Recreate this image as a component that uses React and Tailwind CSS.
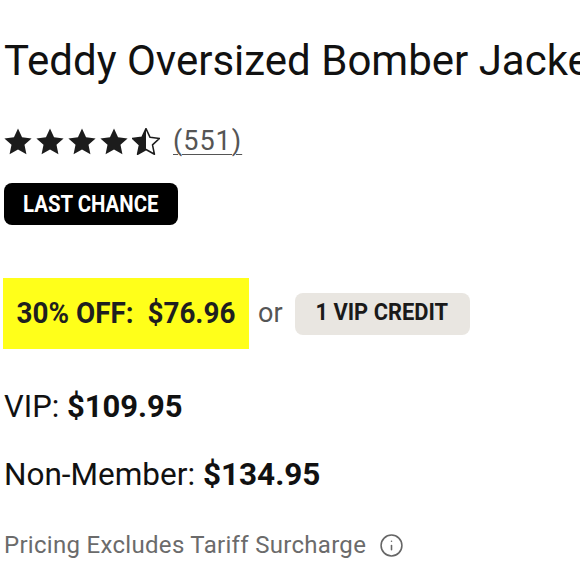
import React from "react";
import { Info } from "lucide-react";

function Star({ half = false }) {
  const d =
    "M12 2.2l2.95 6.35 6.95.78-5.17 4.72 1.42 6.85L12 17.42l-6.15 3.48 1.42-6.85L2.1 9.33l6.95-.78z";
  return (
    <svg width="28" height="27" viewBox="1.8 1.8 20.4 19.6">
      <defs>
        <clipPath id="half">
          <rect x="0" y="0" width="12" height="24" />
        </clipPath>
      </defs>
      {half ? (
        <>
          <path d={d} fill="none" stroke="#1c1c1c" strokeWidth="1.1" strokeLinejoin="round" />
          <path d={d} fill="#1c1c1c" clipPath="url(#half)" />
        </>
      ) : (
        <path d={d} fill="#1c1c1c" />
      )}
    </svg>
  );
}

export default function App() {
  return (
    <div
      className="w-[580px] h-[580px] overflow-hidden bg-white pl-[4px] pt-[36px]"
      style={{ fontFamily: "Roboto, sans-serif" }}
    >
      <h1 className="text-[42px] leading-[50px] text-[#111] whitespace-nowrap">
        Teddy Oversized Bomber Jacket
      </h1>

      {/* rating */}
      <div className="mt-[41px] h-[28px] flex items-center">
        <div className="flex gap-[4px]">
          <Star />
          <Star />
          <Star />
          <Star />
          <Star half />
        </div>
        <span className="ml-[13px] text-[27px] leading-[28px] tracking-[1px] text-[#555] underline underline-offset-4 decoration-1">
          (551)
        </span>
      </div>

      <div className="mt-[28px] flex items-center justify-center h-[42px] w-[174px] rounded-[8px] bg-black text-white font-bold text-[24px]">
        <span className="inline-block scale-x-[0.85]">LAST CHANCE</span>
      </div>

      {/* price */}
      <div className="mt-[53px] flex items-center -ml-[1px]">
        <div className="h-[71px] w-[246px] bg-[#ffff1a] flex items-center justify-center font-bold text-[29px] text-[#1f1f1f]">
          <span className="inline-block scale-x-[0.96] whitespace-pre">30% OFF:  $76.96</span>
        </div>
        <span className="ml-[9px] text-[27px] text-[#555]">or</span>
        <div className="ml-[12px] h-[42px] w-[175px] rounded-[8px] bg-[#e9e6e1] flex items-center justify-center font-bold text-[23px] text-[#1a1a1a]">
          <span className="inline-block scale-x-[0.95]">1 VIP CREDIT</span>
        </div>
      </div>

      <p className="mt-[38px] text-[31px] leading-[40px] text-[#111]">
        VIP: <span className="font-bold">$109.95</span>
      </p>
      <p className="mt-[28px] text-[31.5px] leading-[40px] text-[#111]">
        Non-Member: <span className="font-bold">$134.95</span>
      </p>

      <div className="mt-[34px] flex items-center text-[24px] leading-[32px] tracking-[0.3px] text-[#6b6b6b]">
        <span>Pricing Excludes Tariff Surcharge</span>
        <Info size={25} strokeWidth={1.5} className="ml-[13px] text-[#666]" />
      </div>
    </div>
  );
}
